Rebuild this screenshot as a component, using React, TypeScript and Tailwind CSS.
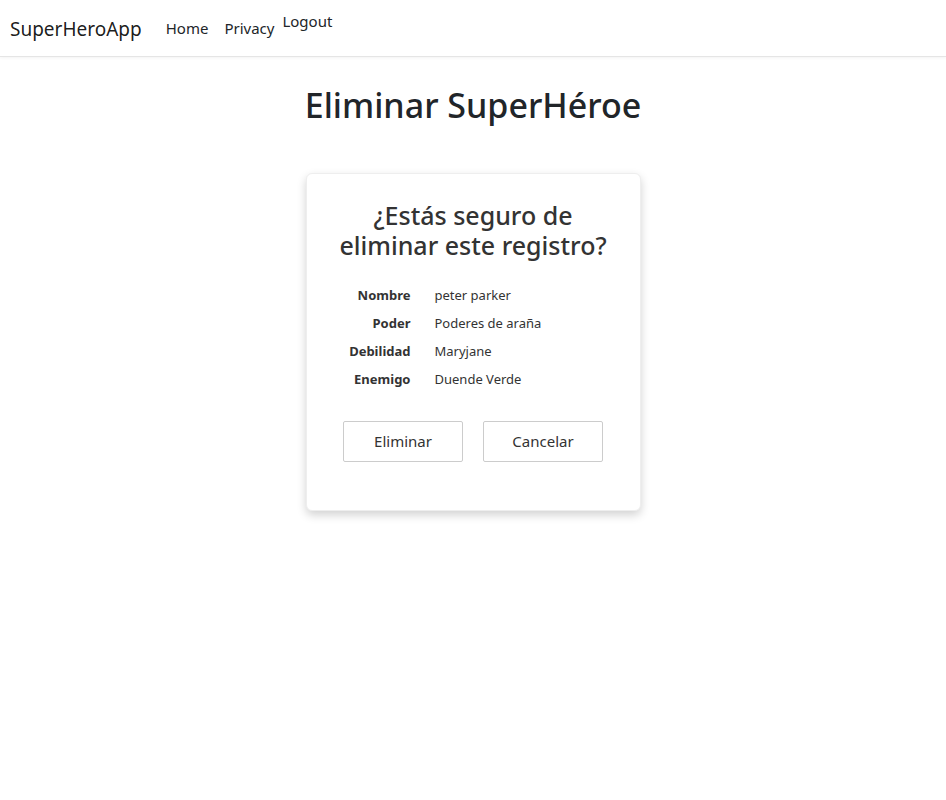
export default function App() {
  const rows = [
    { label: "Nombre", value: "peter parker" },
    { label: "Poder", value: "Poderes de araña" },
    { label: "Debilidad", value: "Maryjane" },
    { label: "Enemigo", value: "Duende Verde" },
  ];

  return (
    <div className="min-h-screen bg-white text-[#212529] font-['Noto_Sans',sans-serif]">
      {/* Navbar */}
      <nav className="h-[57px] border-b border-[#e5e5e5] shadow-[0_1px_3px_rgba(0,0,0,0.05)] flex items-start px-[10px]">
        <span className="text-[19px] mt-[15px] text-black/90">SuperHeroApp</span>
        <div className="flex items-start ml-[24px]">
          <a className="text-[15px] mt-[17px]">Home</a>
          <a className="text-[15px] mt-[17px] ml-[16px]">Privacy</a>
          <a className="text-[15px] mt-[10px] ml-[8px]">Logout</a>
        </div>
      </nav>

      <main className="flex flex-col items-center">
        <h1 className="text-[34px] font-medium mt-[28px] leading-[1.2]">Eliminar SuperHéroe</h1>

        <div className="mt-[47px] w-[335px] rounded-md border border-[#eee] bg-white shadow-[0_4px_10px_rgba(0,0,0,0.18)] pt-[26px] pb-[48px] flex flex-col items-center">
          <h2 className="text-[25px] font-medium leading-[30px] text-center text-[#333] whitespace-nowrap">
            <span className="block">¿Estás seguro de</span>
            <span className="block">eliminar este registro?</span>
          </h2>

          <dl className="mt-[25px] grid grid-cols-[104px_1fr] gap-y-[8px] w-full text-[13px] text-[#333]">
            {rows.map((r) => (
              <div key={r.label} className="contents">
                <dt className="text-right font-bold leading-[20px]">{r.label}</dt>
                <dd className="pl-[24px] leading-[20px]">{r.value}</dd>
              </div>
            ))}
          </dl>

          <div className="mt-[32px] flex gap-[20px]">
            <button className="w-[120px] h-[41px] border border-[#ccc] rounded-[2px] text-[15px] text-[#333] bg-white">
              Eliminar
            </button>
            <button className="w-[120px] h-[41px] border border-[#ccc] rounded-[2px] text-[15px] text-[#333] bg-white">
              Cancelar
            </button>
          </div>
        </div>
      </main>
    </div>
  );
}
